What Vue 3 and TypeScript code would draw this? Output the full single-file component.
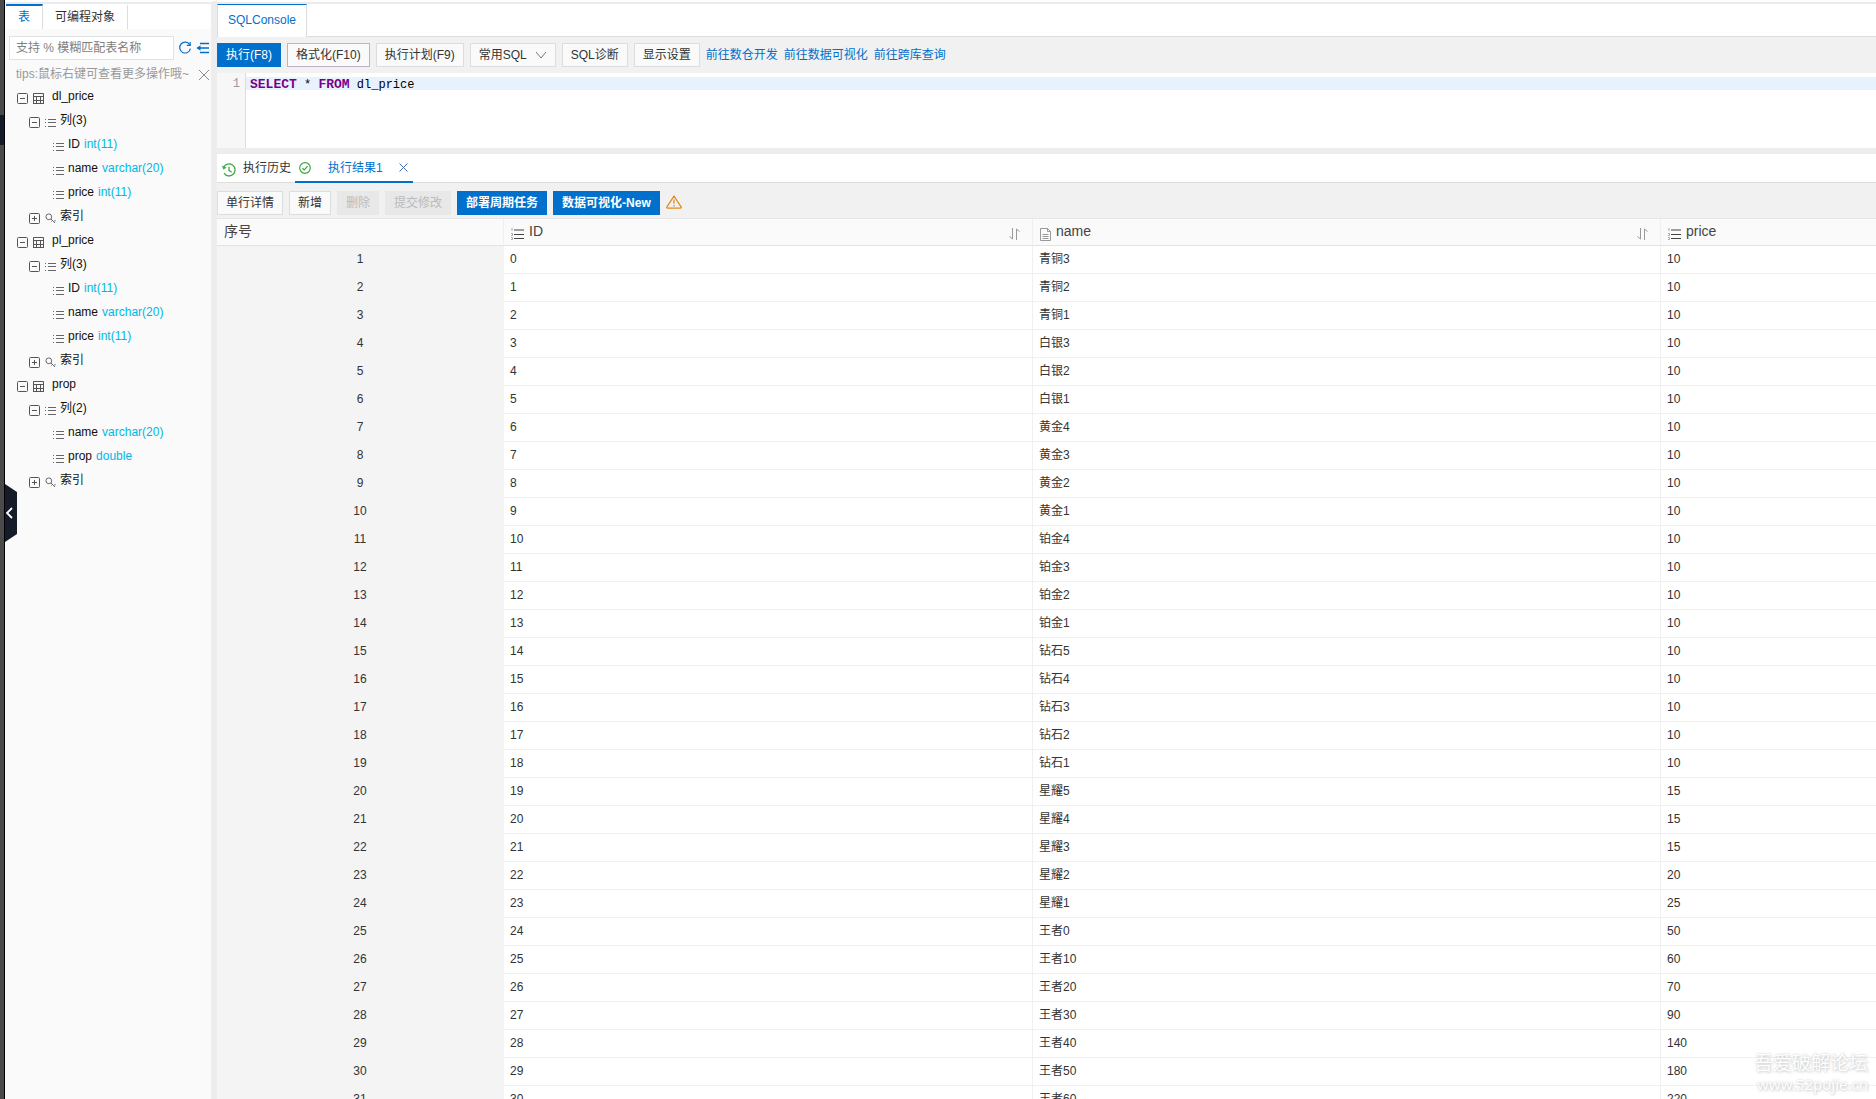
<script setup lang="ts">
import { ref } from 'vue'

interface TreeRow {
  level: number
  kind: 'table' | 'columns' | 'field' | 'index'
  label: string
  type?: string
}

const tree: TreeRow[] = [
  { level: 0, kind: 'table', label: 'dl_price' },
  { level: 1, kind: 'columns', label: '列(3)' },
  { level: 2, kind: 'field', label: 'ID', type: 'int(11)' },
  { level: 2, kind: 'field', label: 'name', type: 'varchar(20)' },
  { level: 2, kind: 'field', label: 'price', type: 'int(11)' },
  { level: 1, kind: 'index', label: '索引' },
  { level: 0, kind: 'table', label: 'pl_price' },
  { level: 1, kind: 'columns', label: '列(3)' },
  { level: 2, kind: 'field', label: 'ID', type: 'int(11)' },
  { level: 2, kind: 'field', label: 'name', type: 'varchar(20)' },
  { level: 2, kind: 'field', label: 'price', type: 'int(11)' },
  { level: 1, kind: 'index', label: '索引' },
  { level: 0, kind: 'table', label: 'prop' },
  { level: 1, kind: 'columns', label: '列(2)' },
  { level: 2, kind: 'field', label: 'name', type: 'varchar(20)' },
  { level: 2, kind: 'field', label: 'prop', type: 'double' },
  { level: 1, kind: 'index', label: '索引' },
]

const records: [string, number][] = [
  ['青铜3', 10], ['青铜2', 10], ['青铜1', 10],
  ['白银3', 10], ['白银2', 10], ['白银1', 10],
  ['黄金4', 10], ['黄金3', 10], ['黄金2', 10], ['黄金1', 10],
  ['铂金4', 10], ['铂金3', 10], ['铂金2', 10], ['铂金1', 10],
  ['钻石5', 10], ['钻石4', 10], ['钻石3', 10], ['钻石2', 10], ['钻石1', 10],
  ['星耀5', 15], ['星耀4', 15], ['星耀3', 15], ['星耀2', 20], ['星耀1', 25],
  ['王者0', 50], ['王者10', 60], ['王者20', 70], ['王者30', 90],
  ['王者40', 140], ['王者50', 180], ['王者60', 220],
]

const filter = ref('')
const common = ref('常用SQL')
</script>

<template>
  <div class="page">
    <div class="rail"><div class="rail-active"></div></div>

    <aside class="sidebar">
      <div class="side-tabs">
        <button class="side-tab active">表</button>
        <button class="side-tab">可编程对象</button>
      </div>
      <div class="search">
        <input v-model="filter" type="text" placeholder="支持 % 模糊匹配表名称" aria-label="表名称" />
        <button class="icon-btn" aria-label="刷新">
          <svg width="14" height="14" viewBox="0 0 14 14" fill="none" stroke="#0070cc" stroke-width="1.2">
            <path d="M11.6 3.6A5.4 5.4 0 1 0 12.4 7.6" /><path d="M12.2 1v3.4H8.8" />
          </svg>
        </button>
        <button class="icon-btn" aria-label="收起">
          <svg width="14" height="12" viewBox="0 0 14 12" fill="none" stroke="#0070cc" stroke-width="1.4">
            <path d="M4 1.5h9M1 6h12M4 10.5h9" /><path d="M4.5 3.2v5.6L0.6 6z" fill="#0070cc" stroke="none" />
          </svg>
        </button>
      </div>
      <div class="tips">
        <span>tips:鼠标右键可查看更多操作哦~</span>
        <button class="icon-btn" aria-label="关闭">
          <svg width="12" height="12" viewBox="0 0 12 12" stroke="#8c8c8c"><path d="M1 1l10 10M11 1L1 11" /></svg>
        </button>
      </div>
      <ul class="tree">
        <li v-for="(row, i) in tree" :key="i" :class="['node', 'level-' + row.level]">
          <button v-if="row.level < 2" class="toggle" :aria-label="row.kind === 'index' ? '展开' : '折叠'">
            <svg width="11" height="11" viewBox="0 0 11 11" fill="none" stroke="#555">
              <rect x="0.5" y="0.5" width="10" height="10" rx="1" />
              <path :d="row.kind === 'index' ? 'M3 5.5h5M5.5 3v5' : 'M3 5.5h5'" />
            </svg>
          </button>
          <svg v-if="row.kind === 'table'" class="node-icon" width="11" height="11" viewBox="0 0 11 11" fill="none" stroke="#555">
            <path d="M0.5 10.5v-10h10v10M0 3.5h11M0 7.5h11M0 10.5h11M3.5 3.5v7M7.5 3.5v7" />
          </svg>
          <svg v-else-if="row.kind === 'index'" class="node-icon" width="11" height="11" viewBox="0 0 11 11" fill="none" stroke="#666">
            <circle cx="3.8" cy="3.8" r="2.9" /><path d="M6 6l4 4M7.4 7.4l-1 1.2M9.2 8l1.5-0.4" />
          </svg>
          <svg v-else class="node-icon" width="11" height="11" viewBox="0 0 11 11" stroke="#666">
            <path d="M0 2.5h1M3 2.5h8M0 5.5h1M3 5.5h8M0 9.5h1M3 9.5h8" />
          </svg>
          <span class="label">{{ row.label }}</span>
          <span v-if="row.type" class="type">{{ row.type }}</span>
        </li>
      </ul>
      <button class="handle" aria-label="收起侧栏">
        <svg width="8" height="12" viewBox="0 0 8 12" fill="none" stroke="#fff" stroke-width="1.8"><path d="M7 1L2 6l5 5" /></svg>
      </button>
    </aside>

    <main class="main">
      <div class="console-tabs"><button class="console-tab">SQLConsole</button></div>
      <div class="toolbar">
        <button class="btn primary">执行(F8)</button>
        <button class="btn focus">格式化(F10)</button>
        <button class="btn">执行计划(F9)</button>
        <div class="select">
          <select v-model="common" aria-label="常用SQL"><option>常用SQL</option></select>
          <svg width="12" height="8" viewBox="0 0 12 8" fill="none" stroke="#777"><path d="M1 1l5 6 5-6" /></svg>
        </div>
        <button class="btn">SQL诊断</button>
        <button class="btn">显示设置</button>
        <a href="#">前往数仓开发</a>
        <a href="#">前往数据可视化</a>
        <a href="#">前往跨库查询</a>
      </div>
      <div class="editor">
        <div class="gutter">1</div>
        <div class="code"><div class="line"><b>SELECT</b> * <b>FROM</b> dl_price</div></div>
      </div>
      <div class="result-tabs">
        <button class="result-tab history">
          <svg width="14" height="14" viewBox="0 0 14 14" fill="none" stroke="#3fa845" stroke-width="1.3">
            <path d="M1.6 4.5A6 6 0 1 1 2 10.2" /><path d="M7 3.8v3.6l2.6 1.8" /><path d="M0 2.6l1.2 4 3.6-1.8z" fill="#3fa845" stroke="none" />
          </svg>
          <span>执行历史</span>
        </button>
        <button class="result-tab current">
          <svg width="12" height="12" viewBox="0 0 12 12" fill="none" stroke="#3fa845" stroke-width="1.2">
            <circle cx="6" cy="6" r="5.3" /><path d="M3.4 6.2l1.9 1.8 3.3-3.8" />
          </svg>
          <span>执行结果1</span>
          <svg width="9" height="9" viewBox="0 0 9 9" stroke="#4a6fb5"><path d="M0.5 0.5l8 8M8.5 0.5l-8 8" /></svg>
        </button>
      </div>
      <div class="toolbar results">
        <button class="btn">单行详情</button>
        <button class="btn">新增</button>
        <button class="btn" disabled>删除</button>
        <button class="btn" disabled>提交修改</button>
        <button class="btn primary">部署周期任务</button>
        <button class="btn primary">数据可视化-New</button>
        <svg width="16" height="14" viewBox="0 0 16 14" fill="none" stroke="#e08a1e" stroke-width="1.3">
          <path d="M8 1L15.2 12.2q0.2 1-0.8 1H1.6q-1 0-0.8-1z" stroke-linejoin="round" /><path d="M8 4.6v4.2M8 10v1.4" />
        </svg>
      </div>
      <div class="grid">
        <table>
          <colgroup><col class="c-no" /><col class="c-id" /><col class="c-name" /><col /></colgroup>
          <thead>
            <tr>
              <th>序号</th>
              <th v-for="name in ['ID', 'name', 'price']" :key="name">
                <div class="head">
                  <svg v-if="name === 'name'" class="head-icon" width="11" height="13" viewBox="0 0 11 13" fill="none" stroke="#999">
                    <path d="M0.5 0.5h7l3 3v9h-10zM7.5 0.5v3h3M2.5 6.5h6M2.5 8.5h6M2.5 10.5h6" />
                  </svg>
                  <svg v-else class="head-icon" width="13" height="12" viewBox="0 0 13 12">
                    <path d="M3 2h10M3 6.5h10M3 10.5h10" stroke="#444" stroke-width="1.2" />
                    <path d="M1 0v3M0 5.5h1.5v2H0M0 9.5h1.5v2H0" fill="none" stroke="#8a97a8" stroke-width="0.8" />
                  </svg>
                  <span>{{ name }}</span>
                  <svg v-if="name !== 'price'" class="sort" width="11" height="12" viewBox="0 0 11 12" fill="none" stroke="#999">
                    <path d="M3.5 0v11L0.5 8.5M7.5 12V1L10.5 3.5" />
                  </svg>
                </div>
              </th>
            </tr>
          </thead>
          <tbody>
            <tr v-for="([name, price], i) in records" :key="i">
              <td class="no">{{ i + 1 }}</td>
              <td>{{ i }}</td>
              <td>{{ name }}</td>
              <td>{{ price }}</td>
            </tr>
          </tbody>
        </table>
      </div>
    </main>

    <div class="watermark">
      <div class="wm-name">吾爱破解论坛</div>
      <div class="wm-url">www.52pojie.cn</div>
    </div>
  </div>
</template>

<style>
body {
  overflow: hidden;
}
</style>

<style scoped>
.page {
  position: relative;
  display: flex;
  height: 100vh;
  overflow: hidden;
  background: #fff;
  color: #333;
  font: 12px/18px "Liberation Sans", "Noto Sans CJK SC", sans-serif;
}
.page * {
  box-sizing: border-box;
}
button,
input,
select {
  margin: 0;
  padding: 0;
  border: 0;
  border-radius: 0;
  background: none;
  color: inherit;
  font: inherit;
}
svg {
  display: block;
  flex: none;
}
.rail {
  flex: none;
  width: 5px;
  padding-top: 115px;
  border-right: 1px solid #000;
  background: #4a4a4a;
}
.rail-active {
  height: 30px;
  background: #151b29;
}
.sidebar {
  position: relative;
  flex: none;
  width: 212px;
  border-top: 2px solid #fff;
  border-right: 6px solid #ededed;
  background: #fafafa;
}
.side-tabs {
  display: flex;
  height: 27px;
  padding-left: 1px;
  border-top: 2px solid #ebebeb;
  background: #fff;
}
.side-tab {
  padding: 0 12px 2px;
  border-top: 2px solid transparent;
  border-right: 1px solid #ddd;
  line-height: 20px;
}
.side-tab.active {
  border-top-color: #0070cc;
  color: #0070cc;
}
.search {
  display: flex;
  align-items: center;
  gap: 4px;
  padding: 7px 0 0 4px;
}
.search input {
  width: 165px;
  height: 24px;
  padding: 0 6px;
  border: 1px solid #e3e3e3;
  background: #fff;
}
.search input::placeholder {
  color: #808080;
  opacity: 1;
}
.tips {
  display: flex;
  align-items: center;
  justify-content: space-between;
  height: 24px;
  padding: 3px 1px 0 11px;
  color: #999;
  white-space: nowrap;
}
.tips .icon-btn {
  padding-top: 2px;
}
.tree {
  margin: 0;
  padding: 0;
  list-style: none;
  color: #111;
}
.node {
  display: flex;
  align-items: center;
  height: 24px;
  white-space: nowrap;
}
.level-0 {
  padding-left: 12px;
}
.level-1 {
  padding-left: 24px;
}
.level-2 {
  padding-left: 48px;
}
.toggle,
.node-icon {
  margin-top: 5px;
}
.toggle {
  margin-right: 5px;
}
.node-icon {
  margin-right: 4px;
}
.level-0 .node-icon {
  margin-right: 8px;
}
.type {
  margin-left: 4px;
  color: #00b7e6;
}
.handle {
  position: absolute;
  top: 482px;
  left: 0;
  width: 12px;
  height: 58px;
  background: #151b29;
  clip-path: polygon(0 0, 100% 8px, 100% 50px, 0 100%);
}
.main {
  display: flex;
  flex: 1;
  flex-direction: column;
  min-width: 0;
  border-top: 2px solid #fff;
  background: #fff;
}
.console-tabs {
  display: flex;
  flex: none;
  height: 35px;
  border-top: 2px solid #ebebeb;
  border-bottom: 1px solid #ddd;
}
.console-tab {
  height: 33px;
  padding: 0 10px 2px;
  border: 1px solid #ddd;
  border-top-color: #0070cc;
  border-bottom: 0;
  background: #fff;
  color: #0070cc;
}
.toolbar {
  display: flex;
  flex: none;
  align-items: center;
  gap: 6px;
  height: 36px;
  background: #f1f1f1;
  white-space: nowrap;
}
.toolbar a {
  color: #0070cc;
  text-decoration: none;
}
.btn {
  height: 24px;
  padding: 0 8px;
  border: 1px solid #ddd;
  background: #fafafa;
}
.btn.focus {
  border-color: #bdb3c4;
}
.btn.primary {
  border-color: #0070cc;
  background: #0070cc;
  color: #fff;
}
.btn:disabled {
  border-color: #e8e8e8;
  background: #e8e8e8;
  color: #bbb;
}
.results .primary {
  font-weight: bold;
}
.select {
  display: flex;
  align-items: center;
  width: 86px;
  height: 24px;
  border: 1px solid #ddd;
  background: #fafafa;
}
.select select {
  width: 84px;
  height: 22px;
  margin-right: -20px;
  padding-left: 8px;
  appearance: none;
}
.select svg {
  pointer-events: none;
}
.editor {
  display: flex;
  flex: none;
  height: 75px;
  font-family: "Liberation Mono", monospace;
  line-height: 15px;
}
.gutter {
  width: 29px;
  padding: 4px 5px 0 0;
  border-right: 1px solid #ddd;
  background: #f7f7f7;
  color: #999;
  text-align: right;
}
.code {
  flex: 1;
  padding-top: 4px;
  color: #000;
}
.line {
  height: 13px;
  padding-left: 4px;
  background: #e8f2ff;
  white-space: pre;
}
.line b {
  color: #708;
  font-size: 13px;
}
.result-tabs {
  display: flex;
  flex: none;
  height: 35px;
  border-top: 6px solid #ededed;
  border-bottom: 1px solid #ddd;
}
.result-tab {
  display: flex;
  align-items: center;
}
.history {
  width: 78px;
  gap: 7px;
  padding-left: 5px;
}
.history svg {
  margin-top: 4px;
}
.current {
  height: 29px;
  width: 118px;
  padding-left: 4px;
  border-bottom: 2px solid #0070cc;
  color: #0070cc;
}
.current span {
  margin: 0 16px 0 17px;
}
.results {
  height: 35px;
  padding-top: 5px;
}
.results > svg {
  margin-top: -2px;
}
.grid {
  flex: 1;
  min-height: 0;
  overflow: hidden;
}
table {
  width: 100%;
  border-spacing: 0;
  border-top: 1px solid #e6e6e6;
  table-layout: fixed;
}
.c-no {
  width: 287px;
}
.c-id {
  width: 529px;
}
.c-name {
  width: 628px;
}
th {
  height: 27px;
  padding: 0 0 2px 7px;
  border-right: 1px solid #f0f0f0;
  border-bottom: 1px solid #e3e3e3;
  background: #fafafa;
  color: #444;
  font-size: 14px;
  font-weight: normal;
  line-height: 20px;
  text-align: left;
}
.head {
  display: flex;
  align-items: center;
}
.head-icon {
  margin: 6px 5px 0 0;
}
.sort {
  margin: 5px 12px 0 auto;
}
td {
  height: 28px;
  padding: 0 6px 2px;
  border-right: 1px solid #f0f0f0;
  border-bottom: 1px solid #f0f0f0;
}
th:last-child,
td:last-child {
  border-right: 0;
}
td.no {
  border-color: #f4f4f4;
  background: #f4f4f4;
  text-align: center;
}
.watermark {
  position: absolute;
  right: 8px;
  bottom: 6px;
  color: #fff;
  text-align: right;
  text-shadow: 0 0 2px #ccc, 1px 1px 3px #ccc;
}
.wm-name {
  font-size: 19px;
  line-height: 22px;
}
.wm-url {
  font-family: "Noto Sans", sans-serif;
  font-size: 15px;
  line-height: 18px;
}
</style>
